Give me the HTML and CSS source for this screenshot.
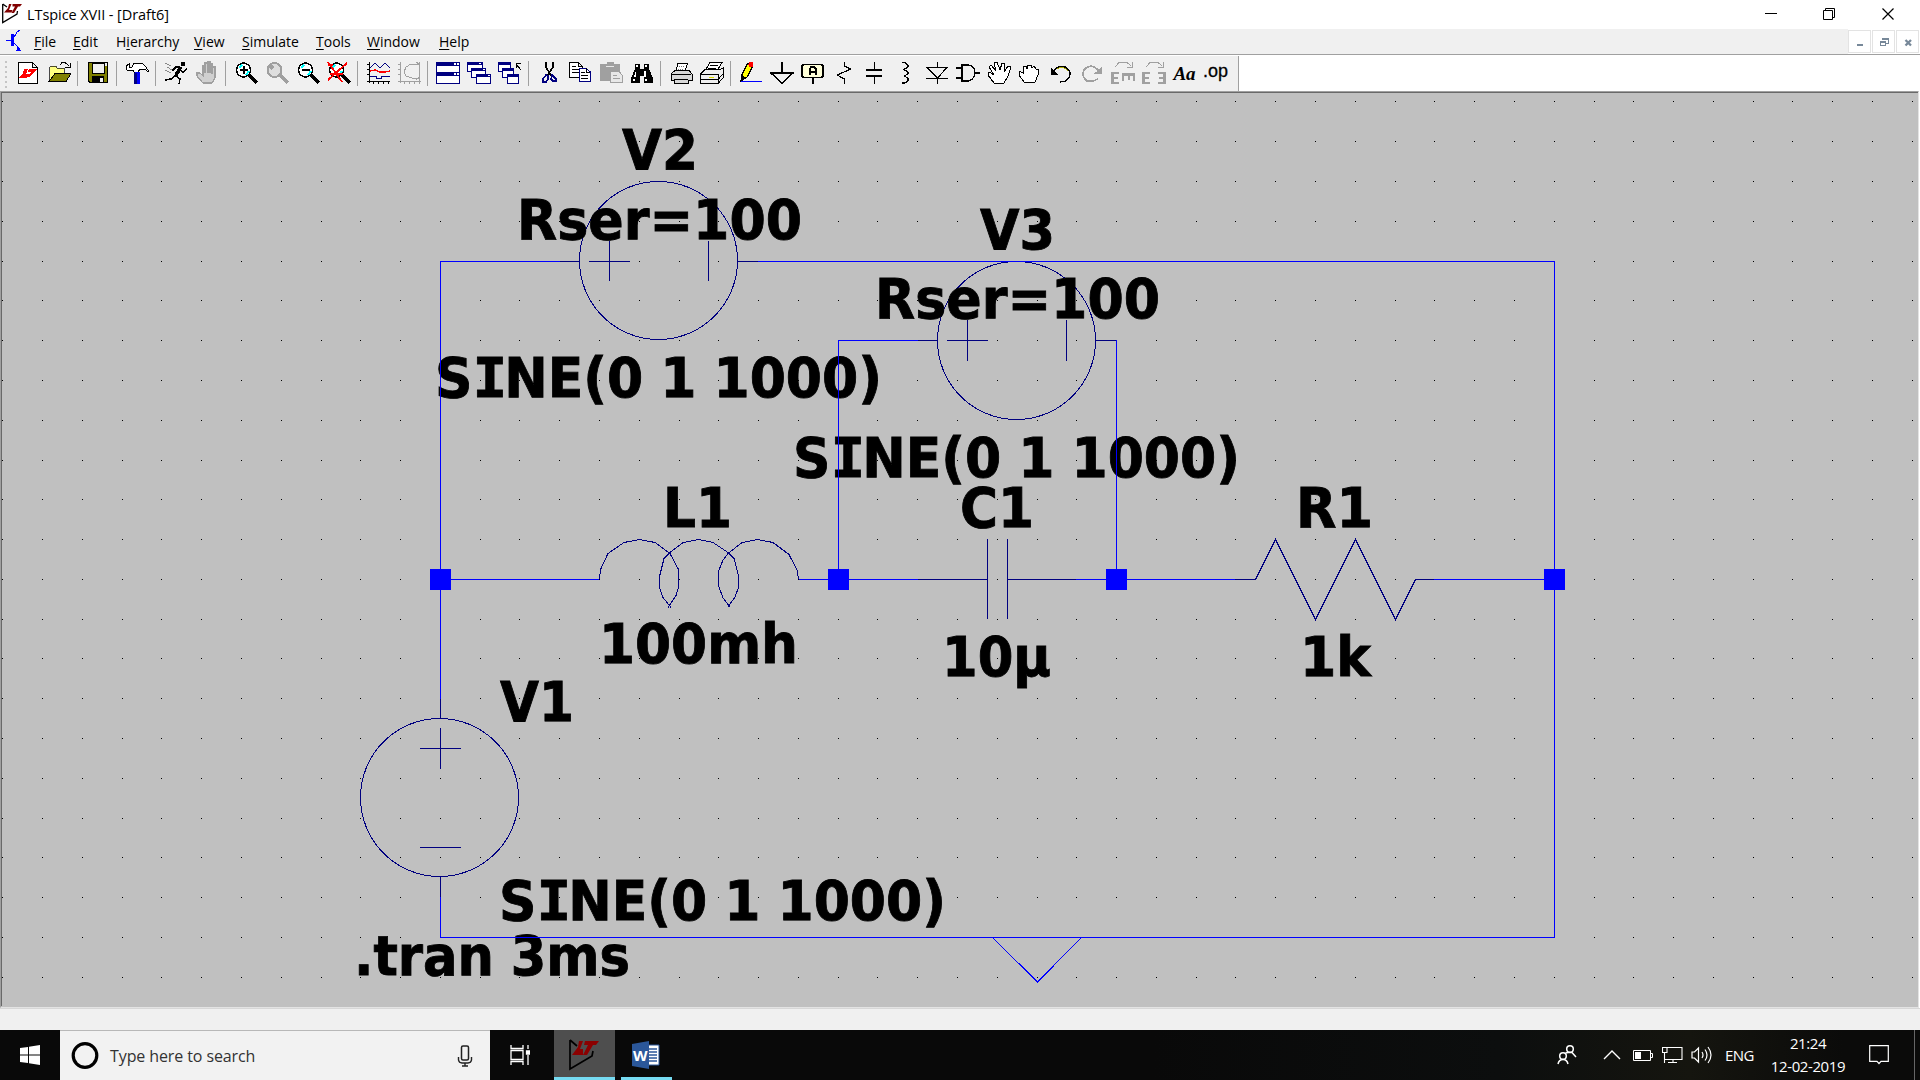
FILE: index.html
```html
<!DOCTYPE html>
<html lang="en">
<head>
<meta charset="utf-8">
<title>LTspice XVII - [Draft6]</title>
<link rel="stylesheet" href="styles.css">
</head>
<body>
<div class="app">
  <header class="titlebar">
    <svg class="logo" width="20" height="24" viewBox="0 0 20 24"><path d="M.7 4V22.500L15 14L15.500 11M.7 4L5 7" fill="none" stroke="#000" stroke-width="1.300"/><path d="M7 4H9.500L7 10H10.500L9.500 12.500H2L6 8ZM10.500 4H20L18 6.500H16L12 13H9.500L13 6.500H10.500Z" fill="#800000"/></svg>
    <span class="title">LTspice XVII - [Draft6]</span>
    <div class="window-controls">
      <svg width="58" height="29" viewBox="0 0 58 29"><path d="M23 13.500H35" stroke="#000" fill="none"/></svg>
      <svg width="58" height="29" viewBox="0 0 58 29"><path d="M23.500 10.500H32.500V19.500H23.500ZM25.500 10V8.500H34.500V17.500H33" stroke="#000" fill="none"/></svg>
      <svg width="62" height="29" viewBox="0 0 62 29"><path d="M24.500 8.500L35.500 19.500M35.500 8.500L24.500 19.500" stroke="#000" stroke-width="1.200" fill="none"/></svg>
    </div>
  </header>

  <nav class="menubar">
    <svg class="doc-icon" width="20" height="24" viewBox="0 0 20 24" shape-rendering="crispEdges"><path d="M0 11.500H6M7 9L10 5L11 3L14 1M8 14L14 20" fill="none" stroke="#00f" stroke-width="1.300"/><path d="M5 5H8V17H5ZM12 17L15 22H10Z" fill="#00f"/></svg>
    <div class="menus">
      <span><u>F</u>ile</span><span><u>E</u>dit</span><span>H<u>i</u>erarchy</span><span><u>V</u>iew</span><span><u>S</u>imulate</span><span><u>T</u>ools</span><span><u>W</u>indow</span><span><u>H</u>elp</span>
    </div>
    <div class="mdi-controls">
      <i><svg width="19" height="19" viewBox="0 0 19 19"><path d="M7 12H13V14H7Z" fill="#778899"/></svg></i>
      <i><svg width="19" height="19" viewBox="0 0 19 19" shape-rendering="crispEdges"><path d="M9 6.500H14V11H12M6.500 9.500H11.500V13.500H6.500Z" fill="none" stroke="#778899"/><path d="M8 6H15V8H8ZM6 9H12V11H6Z" fill="#778899"/></svg></i>
      <i><svg width="19" height="19" viewBox="0 0 19 19"><path d="M7.500 8L13 13.500M13 8L7.500 13.500" fill="none" stroke="#778899" stroke-width="2.300"/></svg></i>
    </div>
  </nav>

  <div class="toolbar">
    <div class="tools">
      <span class="grip"></span>
      <svg viewBox="0 0 24 24"><path d="M2.500 1.500H16.500L21.500 6.500V22.500H2.500ZM16.500 1.500V6.500H21.500" fill="#fff" stroke="#000"/><path d="M8 8H12L10 13H13L11 17H3L7 12ZM13 8H21L19 11H18L14 16H11L15 11H12Z" fill="#f00"/></svg>
      <svg viewBox="0 0 24 24"><path d="M2.500 20V7L4 5H9L10 7H17V12" fill="#ffff80" stroke="#000" stroke-width=".7"/><path d="M2 20.500L8 12.500H24L19 20.500Z" fill="#808000" stroke="#000"/><path d="M13 4L15 1.500H18L22 5M23.500 2V6.500H18" fill="none" stroke="#000"/></svg>
      <b></b>
      <svg viewBox="0 0 24 24"><path d="M2.500 1.500H21.500V21.500H4L2.500 20Z" fill="#808000" stroke="#000"/><path d="M6 2H18V12H6Z" fill="#efefef" stroke="#000"/><path d="M6 15H18V22H6Z" fill="#000"/><path d="M14 17H17V21H14ZM19 2H21V5H19Z" fill="#efefef"/></svg>
      <b></b>
      <svg viewBox="0 0 24 24"><path d="M1 5L4 3V6H7L9 2H17L21 6L24 11L19 8H15L13 11H9L8 9H2Z" fill="#fff" stroke="#000"/><path d="M10 11H15V23H10Z" fill="#00f"/><path d="M9 12H12V23H9Z" fill="#000080"/></svg>
      <b></b>
      <svg viewBox="0 0 24 24"><path d="M17 1H21V5H17Z" fill="#000"/><path d="M17 6L12 15L16 18L15 23M12 14L7 18L1 19M16 6H12L8 10M16 9L19 11L23 8" fill="none" stroke="#000" stroke-width="1.500"/><path d="M17 6L12 14" stroke="#000" stroke-width="3.500"/><path d="M1 2L7 5M3 6L8 9M1 9L7 12" fill="none" stroke="#888"/></svg>
      <svg viewBox="0 0 24 24"><path d="M8 22L2 15V12H5L8 15V5H10V12V2H13V12V1H15V12V3H17V13V6H20V17L17 22Z" fill="#d0d0d0" stroke="#a0a0a0" stroke-width="1.200"/></svg>
      <b></b>
      <svg viewBox="0 0 24 24"><circle cx="9.500" cy="9" r="7" fill="#fff" stroke="#000" stroke-width="1.500"/><path d="M5 7L8 4M12 14L15 10" stroke="#0ff" stroke-width="2"/><path d="M9.500 5V13M5.500 9H13.500" stroke="#000" stroke-width="2"/><path d="M15 14L23 22" stroke="#000" stroke-width="3"/></svg>
      <svg viewBox="0 0 24 24"><circle cx="9.500" cy="9" r="7" fill="#dedede" stroke="#a0a0a0" stroke-width="2"/><path d="M5 8L8 5M15 14L23 22" stroke="#a0a0a0" stroke-width="3"/></svg>
      <svg viewBox="0 0 24 24"><circle cx="9.500" cy="9" r="7" fill="#fff" stroke="#000" stroke-width="1.500"/><path d="M5 7L8 4M12 14L15 10" stroke="#0ff" stroke-width="2"/><path d="M5.500 9H13.500" stroke="#000" stroke-width="2"/><path d="M15 14L23 22" stroke="#000" stroke-width="3"/></svg>
      <svg viewBox="0 0 24 24"><circle cx="9.500" cy="9" r="7" fill="#fff" stroke="#000" stroke-width="1.500"/><path d="M5 7L8 4M12 14L15 10" stroke="#0ff" stroke-width="2"/><path d="M15 14L23 22" stroke="#000" stroke-width="3"/><path d="M1 1L15 21M20 2L1 19M1 4H6M3 13H16" stroke="#f00" stroke-width="1.800"/></svg>
      <b></b>
      <svg viewBox="0 0 24 24"><path d="M3.500 1V22M1 20.500H24M1 3.500H3M1 8.500H3M1 13.500H3M7.500 20V23M12.500 20V23M17.500 20V23M22.500 20V23" stroke="#000" fill="none"/><path d="M4 7L9 2L14 7L19 2L24 7M4 15.500H10V17H15V15H24" stroke="#000080" fill="none"/><path d="M4 10L9 9L14 11H19L24 10" stroke="#f00" fill="none" stroke-width="1.300"/></svg>
      <svg viewBox="0 0 24 24"><path d="M3.500 1V22M1 20.500H24M1 3.500H3M1 8.500H3M1 13.500H3M7.500 20V23M12.500 20V23M17.500 20V23M22.500 1V23M23 3H14L9 6L7 11L9 15L15 17H23M19 1L23 4M19 19L23 16" stroke="#a0a0a0" fill="none"/></svg>
      <b></b>
      <svg viewBox="0 0 24 24"><path d="M.5 1.500H23.500V11.500H.5ZM.5 11.500H23.500V22.500H.5Z" fill="#fff" stroke="#000080"/><path d="M0 1H24V5H0ZM0 11H24V15H0Z" fill="#000080"/><path d="M18 2H20V4H18ZM21 2H23V4H21ZM18 12H20V14H18ZM21 12H23V14H21Z" fill="#fff"/></svg>
      <svg viewBox="0 0 24 24"><g fill="#fff" stroke="#000080"><path d="M.5 1.500H15.500V10.500H.5Z"/><path d="M4.500 7.500H18.500V16.500H4.500Z"/><path d="M9.500 13.500H23.500V22.500H9.500Z"/></g><path d="M0 1H15V4H0ZM4 7H19V10H4ZM9 13H24V16H9Z" fill="#000080"/><path d="M12 2H14V3H12ZM16 8H18V9H16ZM21 14H23V15H21Z" fill="#fff"/></svg>
      <svg viewBox="0 0 24 24"><g fill="#fff" stroke="#000080"><path d="M.5 1.500H12.500V10.500H.5Z"/><path d="M4.500 7.500H15.500V16.500H4.500Z"/><path d="M9.500 13.500H20.500V22.500H9.500Z"/></g><path d="M0 1H13V4H0ZM4 7H16V10H4ZM9 13H21V16H9Z" fill="#000080"/><path d="M23 9L18 3M18.500 7V2.500H23" stroke="#000" fill="none"/></svg>
      <b></b>
      <svg viewBox="0 0 24 24"><path d="M9 1V6L14 15M16 1V6L10 15" stroke="#000" stroke-width="1.600" fill="none"/><path d="M9 14L6 18V21H9L11 18V15ZM15 14L19 18V20H16L14 18Z" fill="none" stroke="#000080" stroke-width="1.500"/></svg>
      <svg viewBox="0 0 24 24"><path d="M1.500 1.500H10L14 5V16.500H1.500ZM10 1.500V5.500H14M4 5.500H8M4 8.500H11M4 11.500H11" fill="#fff" stroke="#000"/><path d="M11.500 7.500H18L22.500 11V20.500H11.500Z" fill="#fff" stroke="#000080"/><path d="M18.500 7V11.500H22M13 11.500H17M13 14.500H20M13 17.500H20" fill="none" stroke="#000"/></svg>
      <svg viewBox="0 0 24 24"><path d="M1 3H8V1H15V3H21V20H1Z" fill="#a0a0a0"/><path d="M7 5.500H15" stroke="#e8e8e8"/><path d="M11.500 10.500H20L23 14V21.500H11.500Z" fill="#e8e8e8" stroke="#a0a0a0"/><path d="M14 14.500H18M14 17.500H21" stroke="#a0a0a0"/></svg>
      <svg viewBox="0 0 24 24"><path d="M5 3H10V8H14V3H19V8L23 17V22H14V15H10V22H1V17L5 8Z" fill="#000"/><path d="M6 4H8V6H6ZM15 4H17V6H15ZM6 10L4 16H6ZM14 10H16V16H14ZM3 18H5V20H3ZM15 18H17V20H15Z" fill="#fff"/></svg>
      <b></b>
      <svg viewBox="0 0 24 24"><path d="M7 10L9 2.500H18.500L16 10" fill="#fff" stroke="#000"/><path d="M2 13L6 9.500H20L23 13V19H19V22.500H5V19H2Z" fill="#d8d8d8" stroke="#000"/><path d="M10 5.500H16M9 8.500H15" stroke="#777" stroke-dasharray="1 1"/><path d="M3 13.500H22M5 18.500H19" stroke="#000"/></svg>
      <svg viewBox="0 0 24 24"><path d="M5 10L10 1.500H22L17 10" fill="#fff" stroke="#000"/><path d="M.5 13L5 8.500H20L23 7V17L18 22.500H.5Z" fill="#efefef" stroke="#000"/><path d="M10 4.500H18M8 7.500H16M1 13.500H18V22M1 18.500H18L23 13" stroke="#000" fill="none"/><path d="M9 16.500H14" stroke="#dd0" stroke-width="1.500"/></svg>
      <b></b>
      <svg viewBox="0 0 24 24"><path d="M2 20L3 13L9 2L14 5L8 16Z" fill="#ff0" stroke="#000" stroke-width="1.300"/><path d="M2 20L3 14L7 17Z" fill="#000"/><circle cx="12" cy="3.500" r="2.500" fill="#f00"/><path d="M2 20.500H23" stroke="#00f"/></svg>
      <svg viewBox="0 0 24 24"><path d="M12 1V12M1 12H23L12 22.500Z" fill="none" stroke="#000" stroke-width="1.500"/></svg>
      <svg viewBox="0 0 24 24"><rect x="1" y="3.500" width="21" height="13" rx="2" fill="#ffffd8" stroke="#000" stroke-width="1.800"/><path d="M12 17V23M9 14V8L10 6H13L15 8V14M9 11H15" stroke="#000" stroke-width="1.600" fill="none"/></svg>
      <svg viewBox="0 0 24 24"><path d="M12.500 1V5L19 8L5 14L12.500 18V23" fill="none" stroke="#000" stroke-width="1.200"/></svg>
      <svg viewBox="0 0 24 24"><path d="M11.500 1V9M11.500 15V23" fill="none" stroke="#000" stroke-width="1.300"/><path d="M3 9H19M3 15H19" stroke="#000" stroke-width="2"/></svg>
      <svg viewBox="0 0 24 24"><path d="M8 1.500H11L14 4V6L10 8.500L14 11V13L10 15L14 17V20L11 22H8" fill="none" stroke="#000" stroke-width="1.300"/></svg>
      <svg viewBox="0 0 24 24"><path d="M12.500 1V6M12.500 17V23M1 6.500H23M2 6.500L12.500 17L22 6.500M1 17.500H23" fill="none" stroke="#000" stroke-width="1.200"/></svg>
      <svg viewBox="0 0 24 24"><path d="M0 7H6M0 17H6M6 4H12Q19 5 19 12Q18 19 12 20H6ZM19 12H24" fill="none" stroke="#000" stroke-width="1.300"/></svg>
      <svg viewBox="0 0 24 24"><path d="M7 22L1 14L2 11L7 14L2 6L4 4L9 10L7 2L10 1L13 9L15 2L18 2L17 11L21 5L24 6L21 15L17 22Z" fill="#fff" stroke="#000"/></svg>
      <svg viewBox="0 0 24 24"><path d="M6 21L1 14V10L5 12V6L8 5L9 8L10 4H13L14 7L16 5L18 8L20 8V14L17 21Z" fill="#fff" stroke="#000"/></svg>
      <svg viewBox="0 0 24 24"><path d="M4 10Q13 1 20 9Q23 15 17 20L11 21" fill="none" stroke="#000" stroke-width="1.400"/><path d="M8 8Q14 4 19 10" stroke="#aa0" fill="none"/><path d="M2 6V14H10L6 11Z" fill="#000"/></svg>
      <svg viewBox="0 0 24 24"><path d="M19 10Q11 1 4 9Q1 15 7 20H13L18 18" fill="none" stroke="#a0a0a0" stroke-width="1.600"/><path d="M22 5V13H13L18 10Z" fill="#a0a0a0"/></svg>
      <svg viewBox="0 0 24 24"><path d="M0 11H8V13H3V16H7V18H3V21H8V23H0ZM11 12H24V20H22V15H19V19H17V15H13V20H11Z" fill="#a0a0a0"/><path d="M4 6L8 1.500H16L20 5M21.500 1V6.500H16" stroke="#a0a0a0" fill="none"/></svg>
      <svg viewBox="0 0 24 24"><path d="M0 11H8V13H3V16H7V18H3V21H8V23H0ZM24 11H16V13H21V16H17V18H21V21H16V23H24Z" fill="#a0a0a0"/><path d="M4 6L8 1.500H16L20 5M21.500 1V6.500H16" stroke="#a0a0a0" fill="none"/></svg>
      <span class="tool-text serif">Aa</span>
      <span class="tool-text op">.op</span>
    </div>
  </div>

  <main class="sheet">
    <svg class="schematic" viewBox="2 93 1916 913">
      <path id="grid" fill="#000"/>
      <g class="part">
        <path d="M560 261.500H579M737 261.500H758M589 261.500H630M609.500 241V281M708.500 241V281"/><circle cx="658.500" cy="260.500" r="79"/>
        <path d="M918 340.500H937M1096 340.500H1116M947 340.500H988M967.500 320V361M1066.500 320V361"/><circle cx="1016.500" cy="340.500" r="79"/>
        <path d="M440.500 699V718M440.500 877V897M420 748.500H461M440.500 728V769M420 847.500H461"/><circle cx="439.500" cy="797.500" r="79"/>
        <path d="M599.500 579.500L600.500 569.500L608 553.500L624 542.500L639.500 539.500L655 542.500L670 553.500L678.500 569.500V587.500L676 595.500L668 607.500"/>
        <path d="M671 607.500L663 597.500L659.500 587.500V576.500L664 558.500L670 552.500L683 542.500L698.500 539.500L713 542.500L728 552.500L734 558.500L738.500 575.500V587.500L735 597L727.500 607.500"/>
        <path d="M730.500 607.500L723 598L718.500 585.500L719 570L723 560L728 553.500L742 542.500L757.500 539.500L773 542.500L789 554.500L797 570L798.500 579.500"/>
        <path d="M918 579.500H987M1008 579.500H1076M987.500 539V619M1007.500 539V619"/>
        <path d="M1235 579.500H1255.500L1275.500 539.500L1315.500 619.500L1355.500 539.500L1395.500 619.500L1415.500 579.500H1434"/>
      </g>
      <g class="label">
        <text x="622" y="169" textLength="76" lengthAdjust="spacingAndGlyphs">V2</text>
        <text x="517" y="239" textLength="285" lengthAdjust="spacingAndGlyphs">Rser=100</text>
        <text x="435" y="397" textLength="447" lengthAdjust="spacingAndGlyphs">S<tspan class="slab">I</tspan>NE(0 1 1000)</text>
        <text x="980" y="249" textLength="75" lengthAdjust="spacingAndGlyphs">V3</text>
        <text x="875" y="318" textLength="285" lengthAdjust="spacingAndGlyphs">Rser=100</text>
        <text x="793" y="477" textLength="447" lengthAdjust="spacingAndGlyphs">S<tspan class="slab">I</tspan>NE(0 1 1000)</text>
        <text x="663" y="527" textLength="69" lengthAdjust="spacingAndGlyphs">L1</text>
        <text x="599" y="663" textLength="199" lengthAdjust="spacingAndGlyphs">100mh</text>
        <text x="960" y="527" textLength="74" lengthAdjust="spacingAndGlyphs">C1</text>
        <text x="942" y="676" textLength="109" lengthAdjust="spacingAndGlyphs">10µ</text>
        <text x="1296" y="527" textLength="77" lengthAdjust="spacingAndGlyphs">R1</text>
        <text x="1300" y="676" textLength="71" lengthAdjust="spacingAndGlyphs">1k</text>
        <text x="500" y="721" textLength="74" lengthAdjust="spacingAndGlyphs">V1</text>
        <text x="499" y="920" textLength="447" lengthAdjust="spacingAndGlyphs">S<tspan class="slab">I</tspan>NE(0 1 1000)</text>
        <text x="354" y="975" textLength="276" lengthAdjust="spacingAndGlyphs">.tran 3ms</text>
      </g>
      <g class="wire">
        <path d="M560 261.500H440.500V699M758 261.500H1554.500V937.500H440.500V897M440 579.500H599M799 579.500H918M1076 579.500H1235M1434 579.500H1554M918 340.500H838.500V579M1116.500 340V579"/>
        <path d="M992.500 937.500L1037.500 982L1081.500 937.500"/>
      </g>
      <path class="node" d="M430 569h21v21h-21zM828 569h21v21h-21zM1106 569h21v21h-21zM1544 569h21v21h-21z"/>
    </svg>
  </main>
  <div class="statusbar"></div>

  <footer class="taskbar">
    <div class="start"><svg width="20" height="20" viewBox="0 0 20 20"><path d="M0 3L8 2V9.500H0ZM9 1.800L20 0V9.500H9ZM0 10.500H8V18L0 17ZM9 10.500H20V20L9 18.200Z" fill="#fff"/></svg></div>
    <div class="search">
      <svg width="28" height="28" viewBox="0 0 28 28"><circle cx="14" cy="13.500" r="11.800" fill="none" stroke="#000" stroke-width="3.200"/></svg>
      <span>Type here to search</span>
      <svg class="mic" width="16" height="22" viewBox="0 0 16 22"><rect x="4.500" y="1" width="7" height="14" rx="1.500" fill="none" stroke="#222" stroke-width="1.500"/><path d="M1.500 12V15Q2 18 5 18H11Q14 18 14.500 15V12M8 18V21M5 21H11" fill="none" stroke="#222" stroke-width="1.400"/></svg>
    </div>
    <div class="taskview"><svg width="20" height="20" viewBox="0 0 20 20" fill="none" stroke="#fff" stroke-width="1.300"><path d="M1 0V3.500H13V0M1 5.500H13V14.500H1ZM1 20V16.500H13V20M18 0V4M18 10V20"/><path d="M16.500 6H19.500V9H16.500Z" fill="#fff"/></svg></div>
    <div class="task active"><svg width="30" height="32" viewBox="0 0 30 32"><path d="M1 1V30L23 17L24 12M1 1L8 7" fill="none" stroke="#000" stroke-width="1.700"/><path d="M10 2H14L11 10H14V16H3L9 8ZM16 2H30L27 6H24L18 16H14L19 6H15Z" fill="#8b0000"/></svg></div>
    <div class="task word"><svg width="28" height="28" viewBox="0 0 28 28"><path d="M14 4H27V24H14Z" fill="#fff" stroke="#2b579a"/><path d="M17 8H25M17 11H25M17 14H25M17 17H25M17 20H25" stroke="#2b579a" stroke-width="1.500"/><path d="M0 3L17 0V28L0 25Z" fill="#2b579a"/></svg><em>W</em></div>
    <div class="tray">
      <svg width="20" height="22" viewBox="0 0 20 22" fill="none" stroke="#fff" stroke-width="1.500"><circle cx="13" cy="5" r="3.300"/><circle cx="6" cy="12" r="3.300"/><path d="M8.500 9L11 8.500H15L19 13M1 20Q2 15.500 6 15.500Q10 15.500 11 20"/></svg>
      <svg width="18" height="22" viewBox="0 0 18 22" fill="none" stroke="#fff" stroke-width="1.400"><path d="M1 15L9 7L17 15"/></svg>
      <svg width="20" height="22" viewBox="0 0 20 22"><path d="M.5 6.500H17.500V16.500H.5ZM18 9.500H19.500V13.500H18" fill="none" stroke="#fff"/><path d="M2 8H8V15H2Z" fill="#fff"/></svg>
      <svg width="21" height="22" viewBox="0 0 21 22" fill="none" stroke="#fff" stroke-width="1.100"><path d="M5 3.500H20V15.500H3M.5 3.500H5V8.500H.5ZM2.500 9V19M11 16V18.500M6 18.500H15"/></svg>
      <svg width="22" height="22" viewBox="0 0 22 22" fill="none" stroke="#fff" stroke-width="1.200"><path d="M1 8H3.500L7.500 4V18L3.500 14H1ZM11 8Q13 11 11 14M14 5.500Q18 11 14 16.500M17 3Q23 11 17 19"/></svg>
      <span class="lang">ENG</span>
      <div class="clock"><span>21:24</span><span class="date">12-02-2019</span></div>
      <svg width="20" height="22" viewBox="0 0 20 22" fill="none" stroke="#fff" stroke-width="1.200"><path d="M.7 1.700H19.300V17.300H12L10 19.500L8 17.300H.7Z"/></svg>
      <span class="peek"></span>
    </div>
  </footer>
</div>
<script src="grid.js"></script>
</body>
</html>
```
FILE: styles.css
```css
* { box-sizing: border-box; }
body { margin: 0; overflow: hidden; font-family: "Open Sans", "Noto Sans", sans-serif; color: #000; }
svg { display: block; flex: none; }
.app { width: 1920px; height: 1080px; display: flex; flex-direction: column; background: #fff; }

.titlebar { height: 29px; display: flex; background: #fff; }
.logo { margin: 0 0 0 2px; }
.title { margin-left: 5px; font-size: 14.5px; line-height: 30px; letter-spacing: -0.07px; white-space: nowrap; }
.window-controls { display: flex; margin-left: auto; }

.menubar { height: 25px; display: flex; background: #f0f0f0; }
.doc-icon { margin-left: 6px; }
.menus { display: grid; grid-template-columns: 39px 43px 78px 48px 74px 51px 72px 60px; margin-left: 8px; font-size: 14px; line-height: 25px; white-space: nowrap; }
.menus u { text-underline-offset: 2px; }
.mdi-controls { display: flex; gap: 1px; margin-left: auto; padding: 1px 1px 0 0; background: #fff; }
.mdi-controls i { width: 23px; height: 23px; border: 1px solid #e3e3e3; background: #fff; padding: 1px; }

.toolbar { height: 37px; border-top: 1px solid #a0a0a0; background: #fff; }
.tools { display: flex; width: 1239px; height: 35px; margin-top: 1px; padding-top: 5px; background: #f0f0f0; border-right: 1px solid #a0a0a0; }
.tools svg { width: 24px; height: 24px; margin: 0 3px 0 4px; shape-rendering: crispEdges; }
.grip { width: 2px; height: 28px; margin: 0 5px; background: repeating-linear-gradient(#c4c4c4 0 2px, #f0f0f0 2px 5px); }
.tools b { width: 1px; height: 25px; margin: 0 4px 0 3px; background: #a0a0a0; }
.tool-text { width: 31px; text-align: center; white-space: nowrap; }
.serif { font: italic bold 19px/26px "Liberation Serif", serif; }
.op { font: 500 18px/21px "Liberation Sans", sans-serif; -webkit-text-stroke: 0.3px #000; }

.sheet { height: 917px; border: 1px solid; border-color: #a0a0a0 #e3e3e3 #e3e3e3 #a0a0a0; margin-right: 1px; background: #c0c0c0; overflow: hidden; }
.schematic { border-left: 1px solid #696969; border-top: 1px solid #696969; width: 1917px; height: 914px; }
#grid { shape-rendering: crispEdges; }
.part { fill: none; stroke: #000080; stroke-width: 1; shape-rendering: crispEdges; }
.wire { fill: none; stroke: #00f; stroke-width: 1; shape-rendering: crispEdges; }
.node { fill: #00f; }
.label { font: bold 56px "DejaVu Sans Condensed", "DejaVu Sans", sans-serif; font-stretch: condensed; fill: #000; stroke: #000; stroke-width: 0.8px; word-spacing: -1px; }
.slab { font-family: "DejaVu Sans Mono", monospace; font-stretch: normal; letter-spacing: -3px; }

.statusbar { height: 22px; background: #f0f0f0; border-top: 1px solid #d7d7d7; }

.taskbar { height: 50px; display: flex; background: linear-gradient(90deg, #090909 0 60%, #0c0e0e 78%, #15150f 88%, #0b0b0a 96%); color: #fff; }
.start { width: 60px; padding: 15px 0 0 20px; }
.search { width: 430px; display: flex; align-items: center; padding: 0 17px 0 11px; background: #f2f2f2; border-top: 1px solid #b8b8b8; color: #333; font-size: 16px; }
.search span { margin-left: 11px; letter-spacing: -0.1px; white-space: nowrap; }
.mic { margin-left: auto; }
.taskview { width: 64px; padding: 15px 0 0 20px; }
.task { height: 50px; border-bottom: 3px solid #76dbf2; }
.active { width: 61px; padding: 9px 0 0 15px; background: #4e4e4e; }
.word { width: 51px; margin-left: 6px; padding: 11px 0 0 11px; display: grid; }
.word svg, .word em { grid-area: 1 / 1; }
.word em { font: bold 15px/28px "Open Sans", sans-serif; padding-left: 1px; }
.tray { margin-left: auto; display: flex; height: 50px; padding-top: 14px; font-size: 15px; }
.tray > svg:nth-child(1) { margin-right: 26px; }
.tray > svg:nth-child(2) { margin-right: 12px; }
.tray > svg:nth-child(3) { margin-right: 9px; }
.tray > svg:nth-child(4) { margin-right: 8px; }
.lang { width: 45px; margin-left: 12px; line-height: 22px; letter-spacing: -0.6px; }
.clock { width: 76px; margin-right: 23px; margin-top: -12px; display: flex; flex-direction: column; align-items: center; line-height: 23px; letter-spacing: -0.4px; }
.peek { width: 6px; height: 50px; margin: -14px 0 0 25px; border-left: 1px solid #666; }
```
FILE: grid.js
```js
// Draws the schematic's snap grid as single-pixel dots.
let d = "";
for (let row = 0; row < 23; row++) {
  const y = Math.round(101.4 + 39.79 * row);
  for (let col = 0; col < 49; col++) {
    d += `M${Math.round(2.3 + 39.78 * col)} ${y}h1v1h-1z`;
  }
}
document.getElementById("grid").setAttribute("d", d);
```
